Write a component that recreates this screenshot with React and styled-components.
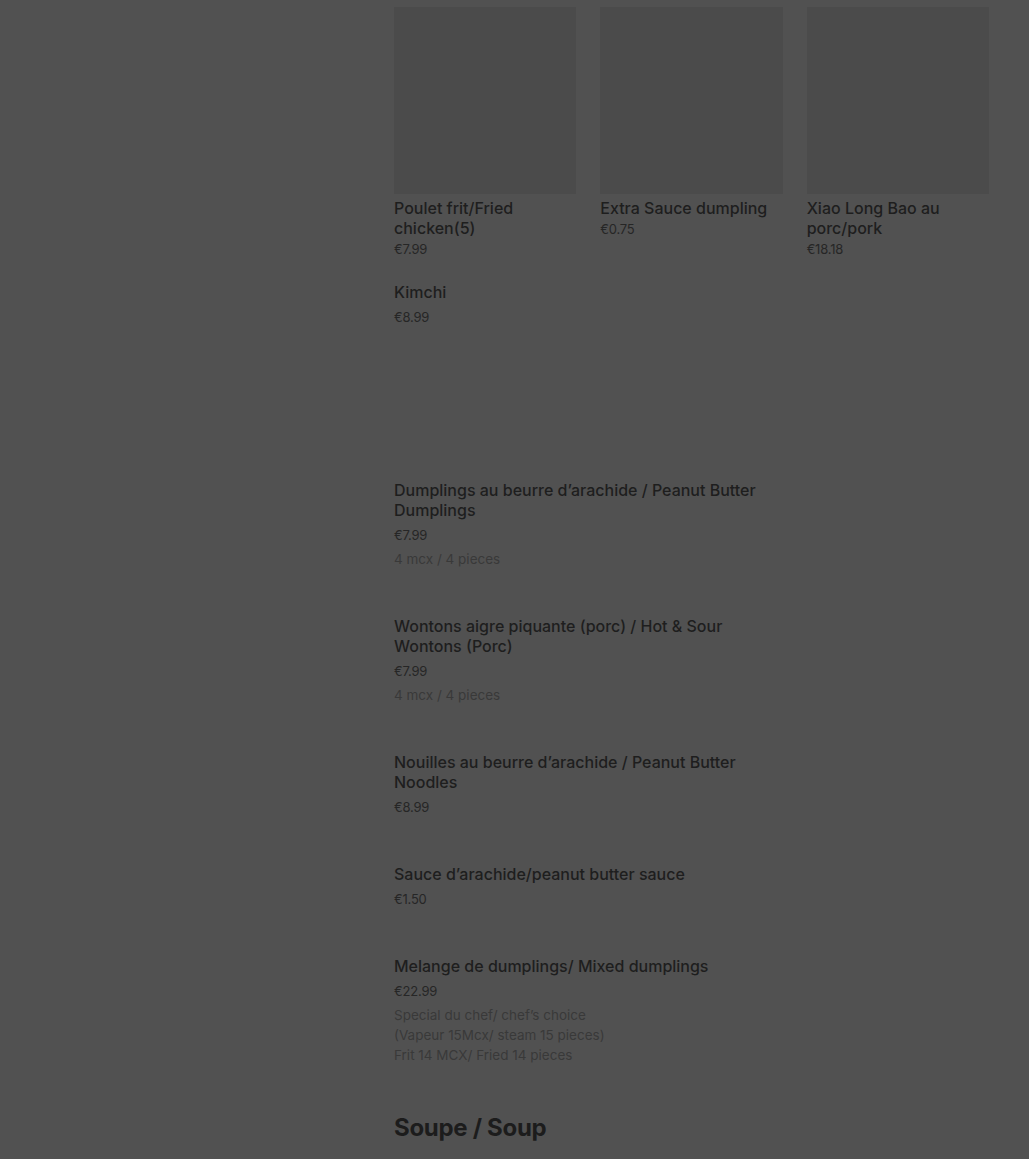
import React from 'react';
import styled, { createGlobalStyle } from 'styled-components';

const featured = [
    { name: 'Poulet frit/Fried chicken(5)', price: '€7.99' },
    { name: 'Extra Sauce dumpling', price: '€0.75' },
    { name: 'Xiao Long Bao au porc/pork', price: '€18.18' },
];

const dishes = [
    {
        name: 'Dumplings au beurre d’arachide / Peanut Butter Dumplings',
        price: '€7.99',
        desc: ['4 mcx / 4 pieces'],
    },
    {
        name: 'Wontons aigre piquante (porc) / Hot & Sour Wontons (Porc)',
        price: '€7.99',
        desc: ['4 mcx / 4 pieces'],
    },
    {
        name: 'Nouilles au beurre d’arachide / Peanut Butter Noodles',
        price: '€8.99',
        desc: [],
    },
    {
        name: 'Sauce d’arachide/peanut butter sauce',
        price: '€1.50',
        desc: [],
    },
    {
        name: 'Melange de dumplings/ Mixed dumplings',
        price: '€22.99',
        desc: [
            'Special du chef/ chef’s choice',
            '(Vapeur 15Mcx/ steam 15 pieces)',
            'Frit 14 MCX/ Fried 14 pieces',
        ],
    },
];

function App() {
    return (
        <>
            <GlobalStyle />
            <Page>
                <Sidebar />
                <Menu>
                    <CardGrid>
                        {featured.map((item) => (
                            <Card key={item.name}>
                                <Photo />
                                <CardTitle>{item.name}</CardTitle>
                                <CardPrice>{item.price}</CardPrice>
                            </Card>
                        ))}
                    </CardGrid>

                    <Extra>
                        <Title>Kimchi</Title>
                        <Price>€8.99</Price>
                    </Extra>

                    <DishList>
                        {dishes.map((dish) => (
                            <Dish key={dish.name}>
                                <Title>{dish.name}</Title>
                                <Price>{dish.price}</Price>
                                {dish.desc.length > 0 && (
                                    <Desc>
                                        {dish.desc.map((line) => (
                                            <div key={line}>{line}</div>
                                        ))}
                                    </Desc>
                                )}
                            </Dish>
                        ))}
                    </DishList>

                    <SectionTitle>Soupe / Soup</SectionTitle>
                </Menu>
            </Page>
        </>
    );
}

const GlobalStyle = createGlobalStyle`
    html, body {
        margin: 0;
        background-color: #515151;
        font-family: 'Inter', 'Roboto', sans-serif;
        -webkit-font-smoothing: antialiased;
    }
`;

const Page = styled.div`
    display: grid;
    grid-template-columns: 394px 595px;
    min-height: 1159px;
    background-color: #515151;
    overflow: hidden;
`;

const Sidebar = styled.aside`
    min-height: 100%;
`;

const Menu = styled.main`
    display: flex;
    flex-direction: column;
    padding-top: 7px;
`;

const CardGrid = styled.div`
    display: grid;
    grid-template-columns: repeat(3, 1fr);
    column-gap: 24px;
`;

const Card = styled.div`
    display: flex;
    flex-direction: column;
`;

const Photo = styled.div`
    height: 187px;
    background-color: #4b4b4b;
    margin-bottom: 4px;
`;

const CardTitle = styled.div`
    font-size: 16px;
    font-weight: 500;
    line-height: 20px;
    color: #1e1e1e;
`;

const CardPrice = styled.div`
    font-size: 13px;
    line-height: 18px;
    color: #262626;
    margin-top: 2px;
    letter-spacing: -0.2px;
`;

const Extra = styled.div`
    margin-top: 24px;
`;

const DishList = styled.div`
    display: flex;
    flex-direction: column;
    gap: 47px;
    width: 389px;
    margin-top: 153px;
`;

const Dish = styled.div`
    display: flex;
    flex-direction: column;
`;

const Title = styled.div`
    font-size: 16px;
    font-weight: 500;
    line-height: 20px;
    color: #1e1e1e;
`;

const Price = styled.div`
    font-size: 13px;
    line-height: 20px;
    color: #262626;
    margin-top: 5px;
    letter-spacing: -0.2px;
`;

const Desc = styled.div`
    font-size: 13.5px;
    line-height: 20px;
    color: #393939;
    margin-top: 4px;
`;

const SectionTitle = styled.h2`
    margin: 47px 0 0;
    font-size: 24px;
    font-weight: 700;
    line-height: 32px;
    color: #1c1c1c;
    letter-spacing: -0.3px;
`;

export default App;
